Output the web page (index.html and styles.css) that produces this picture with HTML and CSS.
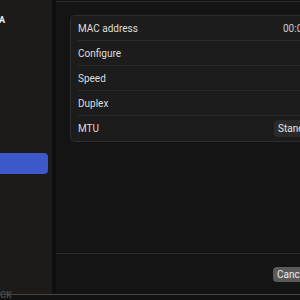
FILE: index.html
```html
<!DOCTYPE html>
<html>

<head>
    <title>Network</title>
    <link rel="stylesheet" href="styles.css">
</head>

<body>

    <div class="window">
        <div class="sidebar">
            <div class="side-title">A</div>
            <div class="side-item selected"></div>
            <div class="side-foot">CK</div>
        </div>

        <div class="main">
            <div class="content">
                <div class="group">
                    <div class="row">
                        <span class="label">MAC address</span>
                        <span class="value">00:0</span>
                    </div>
                    <div class="row">
                        <span class="label">Configure</span>
                    </div>
                    <div class="row">
                        <span class="label">Speed</span>
                    </div>
                    <div class="row">
                        <span class="label">Duplex</span>
                    </div>
                    <div class="row">
                        <span class="label">MTU</span>
                        <span class="popup">Stand</span>
                    </div>
                </div>
            </div>

            <div class="footer">
                <button class="cancel-btn">Canc</button>
            </div>
        </div>
    </div>

    <div class="bottom-bar"></div>

</body>

</html>
```

FILE: styles.css
```css
body {
    margin: 0;
    width: 300px;
    height: 300px;
    overflow: hidden;
    font-family: Roboto, "Liberation Sans", sans-serif;
    font-size: 10px;
    background-color: #121212;
    color: #dedede;
}

.window {
    display: flex;
    height: 294px;
}

.sidebar {
    width: 52px;
    flex-shrink: 0;
    display: flex;
    flex-direction: column;
    background-color: #1d1b1a;
    border-right: 4px solid #0e0e0e;
}

.side-title {
    margin: 15px 0 0 -1px;
    height: 14px;
    font-size: 9px;
    font-weight: bold;
    color: #f0f0f0;
}

.side-item {
    height: 21px;
    width: 48px;
    margin-top: 124px;
    border-radius: 0 4px 4px 0;
}

.side-item.selected {
    background-color: #3c58c9;
}

.side-foot {
    margin-top: auto;
    font-size: 9px;
    font-weight: bold;
    color: #4a4846;
    line-height: 8px;
    height: 3px;
    overflow: visible;
}

.main {
    flex: 1;
    min-width: 0;
    overflow: hidden;
    display: flex;
    flex-direction: column;
    border-top: 1px solid #2e2e2e;
    margin-top: 1px;
    background-color: #141414;
}

.content {
    flex: 1;
    padding: 13px 0 0 14px;
}

.group {
    width: 240px;
    background-color: #1c1c1c;
    border: 1px solid #2d2d2d;
    border-right: none;
    border-radius: 5px 0 0 5px;
}

.row {
    position: relative;
    display: flex;
    align-items: center;
    height: 25px;
    padding-left: 7px;
}

.row + .row::before {
    content: "";
    position: absolute;
    left: 7px;
    right: 0;
    top: -1px;
    height: 1px;
    background-color: #2b2b2b;
}

.label {
    flex: 1;
}

.value {
    width: 28px;
    color: #cfcfcf;
}

.popup {
    width: 33px;
    background-color: #2a2a2a;
    padding: 3px 0 3px 4px;
    border-radius: 4px 0 0 4px;
    color: #e6e6e6;
}

.footer {
    height: 40px;
    border-top: 1px solid #2a2a2a;
    display: flex;
    justify-content: flex-end;
    align-items: center;
}

.cancel-btn {
    background-color: #5a5a5a;
    color: #ececec;
    font-family: Roboto, "Liberation Sans", sans-serif;
    font-size: 10px;
    border: none;
    border-radius: 4px 0 0 4px;
    height: 15px;
    width: 27px;
    padding: 0 0 0 4px;
    text-align: left;
    white-space: nowrap;
    overflow: hidden;
}

.bottom-bar {
    height: 6px;
    border-top: 1px solid #454545;
    background-color: #121212;
}
```
